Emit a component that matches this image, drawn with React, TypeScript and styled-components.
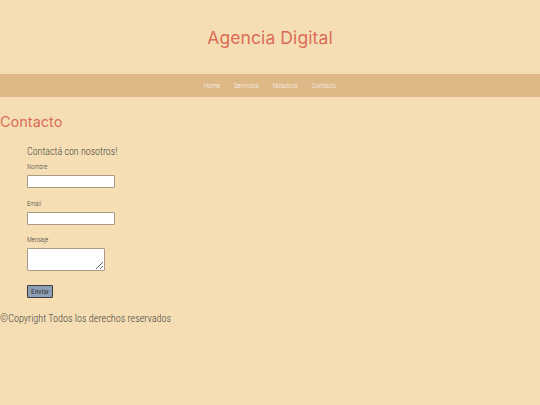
import { createGlobalStyle, styled } from "styled-components";

const GlobalStyle = createGlobalStyle`
    html, body {
        margin: 0;
        padding: 0;
        background-color: #f5deb3;
    }
    body {
        font-family: Roboto, "Liberation Sans", sans-serif;
        font-stretch: 87%;
        font-weight: 300;
        color: #4a4a4a;
    }
`;

export default function App() {
    return (
        <>
            <GlobalStyle />
            <Page>
                <Header>
                    <h1>Agencia Digital</h1>
                </Header>
                <Nav>
                    <a href="#">Home</a>
                    <a href="#">Servicios</a>
                    <a href="#">Nosotros</a>
                    <a href="#">Contacto</a>
                </Nav>
                <Main>
                    <h2>Contacto</h2>
                    <Form onSubmit={(e) => e.preventDefault()}>
                        <h3>Contactá con nosotros!</h3>
                        <Field>
                            <label htmlFor="nombre">Nombre</label>
                            <Input id="nombre" type="text" />
                        </Field>
                        <Field>
                            <label htmlFor="email">Email</label>
                            <Input id="email" type="email" />
                        </Field>
                        <Field>
                            <label htmlFor="mensaje">Mensaje</label>
                            <TextArea id="mensaje" />
                        </Field>
                        <Button type="submit">Enviar</Button>
                    </Form>
                </Main>
                <Footer>©Copyright Todos los derechos reservados</Footer>
            </Page>
        </>
    );
}

const Page = styled.div`
    min-height: 405px;
    background-color: #f5deb3;
`;

const Header = styled.header`
    height: 74px;
    display: flex;
    align-items: center;
    justify-content: center;

    h1 {
        margin: 0;
        font-family: Inter, "Open Sans", sans-serif;
        font-stretch: normal;
        font-weight: 400;
        font-size: 17.5px;
        color: #da6d57;
        letter-spacing: 0.1px;
    }
`;

const Nav = styled.nav`
    height: 23px;
    background-color: #deb887;
    display: flex;
    align-items: center;
    justify-content: center;
    gap: 14px;

    a {
        font-size: 7px;
        font-stretch: 75%;
        font-weight: 300;
        color: rgba(255, 255, 255, 0.9);
        text-decoration: none;
    }
`;

const Main = styled.main`
    padding-top: 16px;

    h2 {
        margin: 0;
        font-family: Inter, "Open Sans", sans-serif;
        font-stretch: normal;
        font-weight: 400;
        font-size: 14.5px;
        color: #da6d57;
    }
`;

const Form = styled.form`
    padding: 16px 0 0 27px;
    display: flex;
    flex-direction: column;
    align-items: flex-start;

    h3 {
        margin: 0 0 6px;
        font-weight: 300;
        font-size: 10px;
        color: #444;
    }
`;

const Field = styled.div`
    display: flex;
    flex-direction: column;
    align-items: flex-start;
    margin-bottom: 11.5px;

    label {
        font-size: 6.5px;
        font-stretch: 75%;
        font-weight: 300;
        color: #444;
        margin-bottom: 4px;
    }
`;

const Input = styled.input`
    box-sizing: border-box;
    width: 88px;
    height: 13px;
    margin: 0;
    padding: 0 2px;
    background: #fff;
    border: 1px solid #a89a85;
    border-radius: 1px;
    font-size: 7px;
`;

const TextArea = styled.textarea`
    box-sizing: border-box;
    width: 78px;
    height: 23px;
    margin: 0;
    padding: 1px 2px;
    background: #fff;
    border: 1px solid #a89a85;
    border-radius: 1px;
    font-size: 7px;
`;

const Button = styled.button`
    box-sizing: border-box;
    width: 26px;
    height: 13.5px;
    margin: 2px 0 0;
    padding: 0;
    background-color: #8ea0b5;
    border: 1px solid #3d3d3d;
    border-radius: 1px;
    font-family: Roboto, sans-serif;
    font-stretch: 75%;
    font-weight: 400;
    font-size: 7.5px;
    color: #333;
`;

const Footer = styled.footer`
    margin-top: 15px;
    font-size: 10.2px;
    color: #444;
`;
